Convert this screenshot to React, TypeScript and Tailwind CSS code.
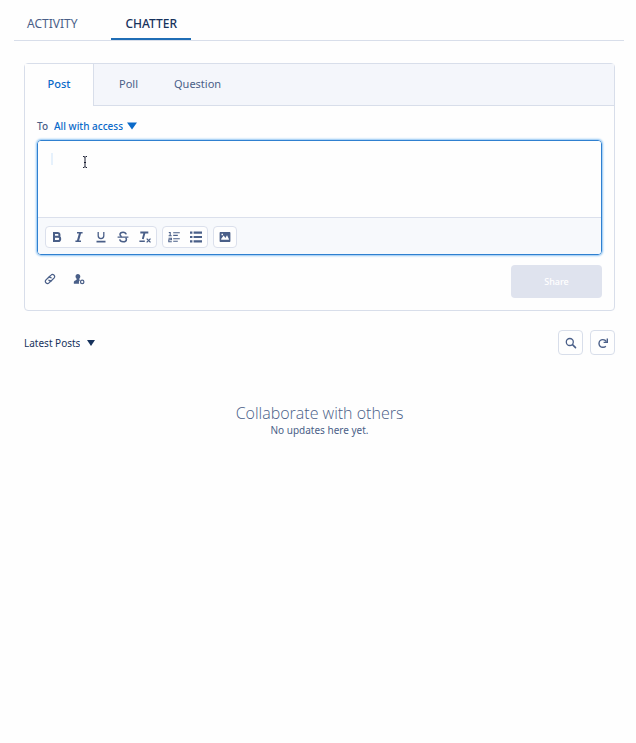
import { useState } from 'react';
import type { ReactNode } from 'react';

const audiences = ['All with access', 'Internal users only'];
const sortOptions = ['Latest Posts', 'Most Recent Activity'];
const publisherTabs = ['Post', 'Poll', 'Question'];

function BoldIcon() {
  return (
    <svg className="h-3 w-3" viewBox="0 0 12 12" fill="none" stroke="currentColor" strokeWidth="2">
      <path d="M3 2h3.6a1.9 1.9 0 0 1 0 3.8H3zM3 5.8h4.1a2.1 2.1 0 0 1 0 4.2H3z" />
    </svg>
  );
}

function ItalicIcon() {
  return (
    <svg className="h-3 w-3" viewBox="0 0 12 12" fill="none" stroke="currentColor">
      <path d="M4 1.7h5.6M2.4 10.3H8" strokeWidth="1.4" />
      <path d="M7.2 1.8L4.8 10.2" strokeWidth="2.1" />
    </svg>
  );
}

function UnderlineIcon() {
  return (
    <svg className="h-3 w-3" viewBox="0 0 12 12" fill="none" stroke="currentColor">
      <path d="M3.2 1v3.8a2.8 2.8 0 0 0 5.600 0V1" strokeWidth="1.3" />
      <path d="M1.500 10.600h9" strokeWidth="1.600" />
    </svg>
  );
}

function StrikeIcon() {
  return (
    <svg className="h-3 w-3" viewBox="0 0 12 12" fill="none" stroke="currentColor" strokeWidth="1.5">
      <path d="M9.2 3.4C8.8 2 7.6 1.3 6.1 1.3c-1.9 0-3.1.9-3.1 2.3 0 1 .6 1.7 1.7 2.1M2.7 8.4c.3 1.5 1.6 2.4 3.4 2.4s3.3-.9 3.3-2.4c0-.8-.3-1.3-.8-1.7" />
      <path d="M.6 6.1h10.8" strokeWidth="1.2" />
    </svg>
  );
}

function ClearFormatIcon() {
  return (
    <svg className="h-3 w-3" viewBox="0 0 12 12" fill="none" stroke="currentColor">
      <path d="M1.3 1.5h8M5.6 1.5L3.8 8" strokeWidth="1.9" />
      <path d="M.4 10.3h5.4" strokeWidth="1.6" />
      <path d="M7.7 7.6l3.8 3.8M11.5 7.6l-3.8 3.8" strokeWidth="1.3" />
    </svg>
  );
}

function NumberedListIcon() {
  return (
    <svg className="h-3 w-3" viewBox="0 0 12 12" fill="none" stroke="currentColor" strokeWidth="1.1">
      <path d="M5.2 1.8h6.6M5.2 4.4h4.6M5.2 7.7h6.6M5.2 10.3h4.6" />
      <path d="M.8 1.5h1.4v3.3M.6 4.8h3.1M.5 7.2h2.9v1.6H.8v1.9h3" />
    </svg>
  );
}

function BulletListIcon() {
  return (
    <svg className="h-3 w-3" viewBox="0 0 12 12" fill="currentColor">
      <path d="M0 .5h2.400v2.200H0zM3.600 .5H12v2.200H3.600zM0 4.900h2.400v2.200H0zM3.600 4.900H12v2.200H3.600zM0 9.300h2.400v2.200H0zM3.600 9.300H12v2.200H3.600z" />
    </svg>
  );
}

function ImageIcon() {
  return (
    <svg className="h-3 w-3" viewBox="0 0 12 12" fill="currentColor" fillRule="evenodd">
      <path d="M1.6 1h8.8c.6 0 1 .4 1 1v8c0 .6-.4 1-1 1H1.6c-.6 0-1-.4-1-1V2c0-.6.4-1 1-1zM2.2 8.7h7.700V7.900L8 4.300 6.400 7 4.700 4.500 2.200 7.800zM2.500 2.700v1.500H4V2.700z" />
    </svg>
  );
}

function LinkIcon() {
  return (
    <svg className="h-3 w-3" viewBox="0 0 12 12" fill="none" stroke="currentColor" strokeWidth="1.2" strokeLinecap="round">
      <path d="M4.700 4.200l2.300-2.100a2.100 2.100 0 0 1 3.200 2.700L7.800 7.200a2.100 2.100 0 0 1-2.900 0" />
      <path d="M7.300 7.800L5 9.900a2.100 2.100 0 0 1-3.200-2.700L4.200 4.800a2.100 2.100 0 0 1 2.900 0" />
    </svg>
  );
}

function MentionIcon() {
  return (
    <svg className="h-3 w-3" viewBox="0 0 12 12" fill="currentColor">
      <path d="M4.900 1c1.400 0 2.400 1 2.400 2.400 0 1-.5 1.800-1.100 2.400v.7l.9.5c-.8.600-1.200 1.400-1.200 2.300 0 .6.1 1 .3 1.500H1.400c-.4 0-.6-.2-.6-.6V9.400c0-1 .600-1.500 1.500-1.900l1.300-.8v-.9C3 5.200 2.500 4.400 2.500 3.400 2.500 2 3.500 1 4.900 1z" />
      <circle cx="9.200" cy="8.900" r="1.700" fill="none" stroke="currentColor" strokeWidth="1.2" />
    </svg>
  );
}

function SearchIcon() {
  return (
    <svg className="h-3 w-3" viewBox="0 0 12 12" fill="none" stroke="currentColor">
      <circle cx="4.8" cy="5" r="3.5" strokeWidth="1.3" />
      <path d="M7.5 7.7l3 2.9" strokeWidth="1.6" strokeLinecap="round" />
    </svg>
  );
}

function RefreshIcon() {
  return (
    <svg className="h-3 w-3" viewBox="0 0 12 12" fill="none" stroke="currentColor" strokeWidth="1.4">
      <path d="M8.8 9.2c-.7.8-1.7 1.1-2.9 1.1C3.5 10.3 2 8.7 2 6.5s1.6-3.9 3.9-3.9c1.5 0 2.7.7 3.5 2" />
      <path d="M10.3 1.4v4H6.6" />
    </svg>
  );
}

function ToolGroup({ children }: { children: ReactNode }) {
  return <div className="flex rounded-sm border border-[#dbe0ec] bg-[#fefefe]">{children}</div>;
}

function ToolButton({ label, children }: { label: string; children: ReactNode }) {
  return (
    <button type="button" aria-label={label} className="flex h-5 w-[22px] items-center justify-center">
      {children}
    </button>
  );
}

export default function App() {
  const [activeTab, setActiveTab] = useState('Post');
  const [post, setPost] = useState('');

  return (
    <main className="min-h-screen bg-[#fefefe] font-['Noto_Sans','Open_Sans',sans-serif] text-[11px] leading-4 text-[#4a5f88]">
      <nav className="mr-3 ml-3.5 flex border-b border-[#d8deea] text-xs">
        <a href="#activity" className="flex h-10 items-center px-[13px] pt-2">
          ACTIVITY
        </a>
        <a
          href="#chatter"
          aria-current="page"
          className="ml-[21px] flex h-10 items-center border-b-2 border-[#1f6db5] px-3.5 pt-2.5 font-medium text-[#16325c]"
        >
          CHATTER
        </a>
      </nav>

      <div className="pt-[22px] pr-[21px] pl-6">
        <section className="rounded-sm border border-[#d8deea]">
          <div role="tablist" className="flex bg-[#f4f6fb] text-[11px]">
            {publisherTabs.map((tab) => (
              <button
                key={tab}
                type="button"
                role="tab"
                aria-selected={activeTab === tab}
                onClick={() => setActiveTab(tab)}
                className={
                  activeTab === tab
                    ? 'h-[42px] w-[69px] border-r border-[#d8deea] bg-[#fefefe] pb-0.5 font-medium text-[#0a6ac9]'
                    : 'h-[42px] border-b border-[#d8deea] pb-0.5 pl-[25px] first:pl-6 last:flex-1 last:pl-9 last:text-left'
                }
              >
                {tab}
              </button>
            ))}
          </div>

          <div className="p-3">
            <div className="flex items-center text-[10px] font-medium">
              <label htmlFor="audience">To</label>
              <select id="audience" className="ml-1.5 field-sizing-content appearance-none bg-transparent text-[#0a6ac9]">
                {audiences.map((item) => (
                  <option key={item}>{item}</option>
                ))}
              </select>
              <svg className="pointer-events-none ml-1 h-2 w-2.5 text-[#0a6ac9]" viewBox="0 0 10 8" fill="currentColor">
                <path d="M0 .5h10L5 7.5z" />
              </svg>
            </div>

            <div className="relative mt-1.5 overflow-hidden rounded-sm border border-[#2f80d0] shadow-[0_0_2px_1px_#8fc4f3]">
              <textarea
                aria-label="Share an update"
                value={post}
                onChange={(e) => setPost(e.target.value)}
                className="block h-[76px] w-full resize-none bg-[#fefefe] px-3 py-2.5 outline-none"
              />
              <span className="pointer-events-none absolute top-3 left-[13px] h-3 w-0.5 bg-[#e6f1fc]" />
              <svg
                className="pointer-events-none absolute top-[15px] left-11 h-3 w-1.5 text-[#1b1f33]"
                viewBox="0 0 6 12"
                fill="none"
                stroke="currentColor"
              >
                <path d="M1 .5h1.2L3 1.3l.8-.8H5M3 1v10M1 11.5h1.2l.8-.8.8.8H5M2 6.5h2" />
              </svg>
              <div className="flex gap-[5px] border-t border-[#dbe0ec] bg-[#f7f9fc] px-[7px] pt-2 pb-1.5">
                <ToolGroup>
                  <ToolButton label="Bold"><BoldIcon /></ToolButton>
                  <ToolButton label="Italic"><ItalicIcon /></ToolButton>
                  <ToolButton label="Underline"><UnderlineIcon /></ToolButton>
                  <ToolButton label="Strikethrough"><StrikeIcon /></ToolButton>
                  <ToolButton label="Remove formatting"><ClearFormatIcon /></ToolButton>
                </ToolGroup>
                <ToolGroup>
                  <ToolButton label="Numbered list"><NumberedListIcon /></ToolButton>
                  <ToolButton label="Bulleted list"><BulletListIcon /></ToolButton>
                </ToolGroup>
                <ToolGroup>
                  <ToolButton label="Image"><ImageIcon /></ToolButton>
                </ToolGroup>
              </div>
            </div>

            <div className="mt-2.5 flex items-start justify-between">
              <div className="flex gap-1 pt-0.5">
                <button type="button" aria-label="Attach a link" className="flex h-6 w-[25px] items-center justify-center">
                  <LinkIcon />
                </button>
                <button type="button" aria-label="Mention someone" className="flex h-6 w-[25px] items-center justify-center">
                  <MentionIcon />
                </button>
              </div>
              <button type="button" disabled className="h-[33px] w-[91px] rounded-sm bg-[#dfe3ee] text-[9px] font-medium text-white">
                Share
              </button>
            </div>
          </div>
        </section>

        <div className="mt-[19px] flex items-center">
          <select
            aria-label="Sort posts"
            className="field-sizing-content appearance-none bg-transparent text-[10px] text-[#16325c]"
          >
            {sortOptions.map((item) => (
              <option key={item}>{item}</option>
            ))}
          </select>
          <svg className="pointer-events-none ml-[7px] h-1.5 w-2 text-[#16325c]" viewBox="0 0 8 6" fill="currentColor">
            <path d="M0 0h8L4 6z" />
          </svg>
          <div className="ml-auto flex gap-[7px]">
            <button
              type="button"
              aria-label="Search this feed"
              className="flex h-[25px] w-[25px] items-center justify-center rounded-sm border border-[#d8deea]"
            >
              <SearchIcon />
            </button>
            <button
              type="button"
              aria-label="Refresh this feed"
              className="flex h-[25px] w-[25px] items-center justify-center rounded-sm border border-[#d8deea]"
            >
              <RefreshIcon />
            </button>
          </div>
        </div>

        <div className="mt-12 text-center">
          <h2 className="font-['Open_Sans','Noto_Sans',sans-serif] text-base leading-5 font-light">Collaborate with others</h2>
          <p className="text-[10px] leading-3.5">No updates here yet.</p>
        </div>
      </div>
    </main>
  );
}
